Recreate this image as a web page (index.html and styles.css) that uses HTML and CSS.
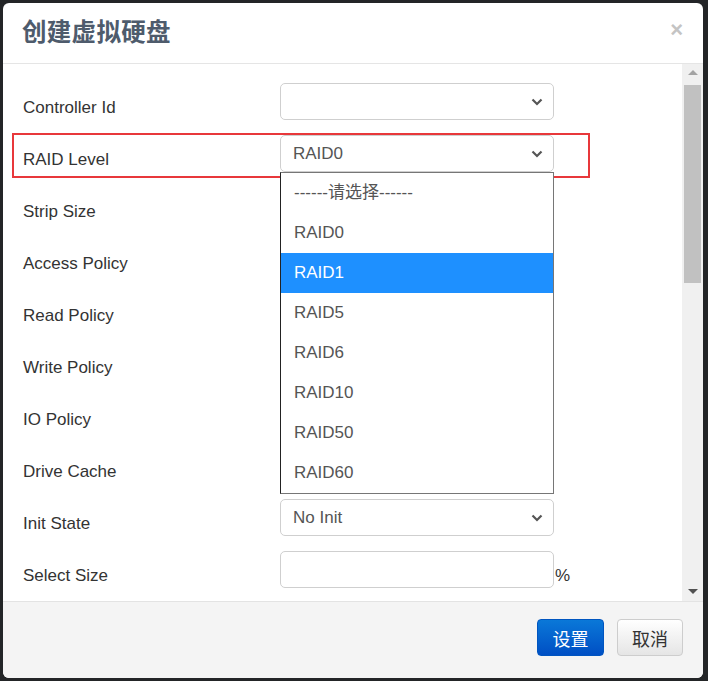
FILE: index.html
```html
<!DOCTYPE html>
<html>
<head>
<meta charset="utf-8">
<link rel="stylesheet" href="styles.css">
</head>
<body>
<div class="dialog">
  <div class="header">
    <h1 class="title">创建虚拟硬盘</h1>
    <span class="close">×</span>
  </div>
  <div class="body">
    <div class="form">
      <div class="row"><label>Controller Id</label><div class="select"><span></span><svg class="chev" viewBox="0 0 12 8"><path d="M1.5 1.5 L6 6 L10.5 1.5" /></svg></div></div>
      <div class="row"><label>RAID Level</label><div class="select"><span>RAID0</span><svg class="chev" viewBox="0 0 12 8"><path d="M1.5 1.5 L6 6 L10.5 1.5" /></svg></div></div>
      <div class="row"><label>Strip Size</label></div>
      <div class="row"><label>Access Policy</label></div>
      <div class="row"><label>Read Policy</label></div>
      <div class="row"><label>Write Policy</label></div>
      <div class="row"><label>IO Policy</label></div>
      <div class="row"><label>Drive Cache</label></div>
      <div class="row"><label>Init State</label><div class="select"><span>No Init</span><svg class="chev" viewBox="0 0 12 8"><path d="M1.5 1.5 L6 6 L10.5 1.5" /></svg></div></div>
      <div class="row"><label>Select Size</label><div class="input"></div><span class="pct">%</span></div>
    </div>
    <div class="scrollbar">
      <div class="arrow up"></div>
      <div class="thumb"></div>
      <div class="track-fill"></div>
      <div class="arrow down"></div>
    </div>
  </div>
  <div class="footer">
    <button class="btn primary">设置</button>
    <button class="btn default">取消</button>
  </div>
  <div class="highlight"></div>
  <ul class="dropdown">
    <li>------请选择------</li>
    <li>RAID0</li>
    <li class="active">RAID1</li>
    <li>RAID5</li>
    <li>RAID6</li>
    <li>RAID10</li>
    <li>RAID50</li>
    <li>RAID60</li>
  </ul>
</div>
</body>
</html>
```

FILE: styles.css
```css
* { box-sizing: border-box; }
html, body { margin: 0; padding: 0; }
body {
  width: 708px;
  height: 681px;
  background: #232527;
  font-family: "Liberation Sans", "Noto Sans CJK SC", sans-serif;
  overflow: hidden;
}
.dialog {
  position: relative;
  margin: 3px 0 0 3px;
  width: 700px;
  height: 675px;
  background: #fff;
  border-radius: 6px;
  overflow: hidden;
  display: flex;
  flex-direction: column;
}
.header {
  height: 61px;
  flex: none;
  border-bottom: 1px solid #e5e5e5;
  display: flex;
  align-items: center;
  justify-content: space-between;
  padding: 0 20px 0 19px;
}
.title {
  margin: 0;
  font-family: "Noto Sans CJK SC", sans-serif;
  font-size: 24.5px;
  font-weight: 700;
  color: #4e5b6c;
  letter-spacing: 0.3px;
  position: relative;
  top: -3px;
}
.close {
  font-family: "Liberation Sans", sans-serif;
  font-size: 22px;
  font-weight: 700;
  color: #c4c4c4;
  position: relative;
  top: -3px;
}
.body {
  flex: none;
  height: 537px;
  display: flex;
}
.form {
  flex: 1;
  padding: 19px 0 0 20px;
  overflow: hidden;
}
.row {
  display: flex;
  align-items: center;
  height: 37px;
  margin-bottom: 15px;
}
.row label {
  width: 257px;
  flex: none;
  font-size: 17px;
  color: #333;
  position: relative;
  top: 6px;
}
.select, .input {
  width: 274px;
  height: 37px;
  border: 1px solid #cfcfcf;
  border-radius: 5px;
  background: #fff;
  display: flex;
  align-items: center;
  justify-content: space-between;
  padding: 0 10px 0 12px;
  font-size: 17px;
  color: #555;
}
.chev {
  width: 12px;
  height: 8px;
  fill: none;
  stroke: #555;
  stroke-width: 2.2;
}
.pct {
  font-size: 17px;
  color: #333;
  margin-left: 1px;
  position: relative;
  top: 6px;
}
.scrollbar {
  width: 21px;
  flex: none;
  background: #f0f0f0;
  display: flex;
  flex-direction: column;
  align-items: center;
}
.arrow {
  width: 0;
  height: 0;
  border-left: 5px solid transparent;
  border-right: 5px solid transparent;
  margin: 7px 0;
}
.arrow.up { border-bottom: 5px solid #a3a3a3; margin-top: 6px; }
.arrow.down { border-top: 5px solid #505050; margin-bottom: 7px; }
.thumb {
  width: 17px;
  height: 198px;
  background: #c1c1c1;
  margin-top: 3px;
}
.track-fill { flex: 1; }
.footer {
  flex: 1;
  background: #f4f4f4;
  border-top: 1px solid #e3e3e3;
  display: flex;
  justify-content: flex-end;
  align-items: flex-start;
  gap: 13px;
  padding: 17px 20px 0 0;
}
.btn {
  height: 37px;
  border-radius: 4px;
  font-family: "Noto Sans CJK SC", sans-serif;
  font-size: 18px;
  padding: 0;
  cursor: pointer;
}
.primary {
  width: 67px;
  color: #fff;
  border: 1px solid #0055c0;
  background: linear-gradient(#0a78d8, #004fc4);
}
.default {
  width: 66px;
  color: #333;
  border: 1px solid #cdcdcd;
  background: linear-gradient(#ffffff, #e5e5e5);
}
.highlight {
  position: absolute;
  left: 9px;
  top: 130px;
  width: 578px;
  height: 45px;
  border: 2px solid #e8383b;
}
.dropdown {
  position: absolute;
  left: 277px;
  top: 169px;
  width: 274px;
  height: 322px;
  margin: 0;
  padding: 0;
  list-style: none;
  background: #fff;
  border: 1px solid #767676;
  border-left-color: #222;
}
.dropdown li {
  height: 40px;
  line-height: 40px;
  padding-left: 13px;
  font-size: 17px;
  color: #555;
}
.dropdown li.active {
  background: #1e90ff;
  color: #fff;
}
```
